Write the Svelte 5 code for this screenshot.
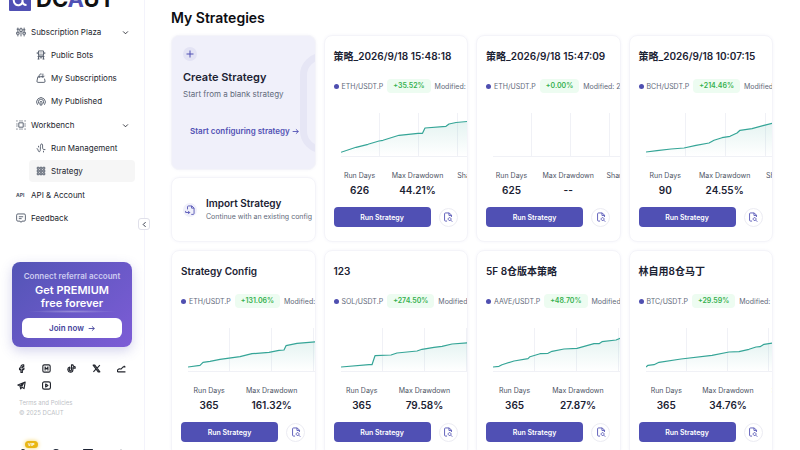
<script>
  const strategies = [
    { name: '策略_2026/9/18 15:48:18', pair: 'ETH/USDT.P', profit: '+35.52%', modified: '2026-09-18', days: '626', drawdown: '44.21%', sharpe: '0.84', step: 39,
      line: '0,39.3 15,34.3 27,31.3 38,28 42,27.3 58,22.3 77,20.3 81.5,20.3 84,15 105,13.3 108,11 115,9.5 128,8.3 150,7' },
    { name: '策略_2026/9/18 15:47:09', pair: 'ETH/USDT.P', profit: '+0.00%', modified: '2026-09-18', days: '625', drawdown: '--', sharpe: '--', step: 39, line: '' },
    { name: '策略_2026/9/18 10:07:15', pair: 'BCH/USDT.P', profit: '+214.46%', modified: '2026-09-18', days: '90', drawdown: '24.55%', sharpe: '3.1', step: 40,
      line: '0,39 11,37.7 25,36 38,35 50,32.3 63,30 68,27.3 76,24.7 84,23.3 91,20 94,17.3 106,15.7 118,12.3 128,10 150,8' },
    { name: 'Strategy Config', pair: 'ETH/USDT.P', profit: '+131.06%', modified: '2026-09-11 16h', days: '365', drawdown: '161.32%', sharpe: '1.9', step: 42,
      line: '0,39 12,37.3 15,34.3 22,33.3 32,31.3 52,28.7 64,25.7 81,24.3 91,22.3 96,22 98,17.7 109,15.3 128,13.7 150,12' },
    { name: '123', pair: 'SOL/USDT.P', profit: '+274.50%', modified: '2026-09-10 8h', days: '365', drawdown: '79.58%', sharpe: '2.4', step: 42,
      line: '0,39 28,36.7 31,36.7 34,27.7 50,27 56,25 76,23 81,21.3 93,19.3 101,18.3 111,16 128,14.7 150,13' },
    { name: '5F 8仓版本策略', pair: 'AAVE/USDT.P', profit: '+48.70%', modified: '2026-09-09 9h', days: '365', drawdown: '27.87%', sharpe: '1.7', step: 42,
      line: '0,39 6,38.3 9,36.7 21,33 35,30.7 37,28.7 47,25.7 55,25.3 59,23.3 71,21 84,20.3 101,15.7 106,15.7 109,13.7 123,12 128,10 150,8' },
    { name: '林自用8仓马丁', pair: 'BTC/USDT.P', profit: '+29.59%', modified: '2026-09-08 7h', days: '365', drawdown: '34.76%', sharpe: '1.2', step: 41,
      line: '0,39 2,37.3 8,36.7 13,34.3 35,31 66,27.3 83,24 93,23.7 103,21.3 110,19 114,18.7 118,16.3 128,14.7 150,13' },
  ];

  const plaza = [
    { label: 'Public Bots', icon: 'bot' },
    { label: 'My Subscriptions', icon: 'bag' },
    { label: 'My Published', icon: 'radio' },
  ];

  const workbench = [
    { label: 'Run Management', icon: 'wave' },
    { label: 'Strategy', icon: 'grid', active: true },
  ];

  const socials = ['facebook', 'medium', 'tiktok', 'x', 'chart', 'telegram', 'youtube'];

  // 16x16 stroke icons
  const icons = {
    sliders: 'M3 1v7M3 12v3M8 1v2M8 7v8M13 1v7M13 12v3M1 8.500h4v3H1zM6 3h4v4H6zM11 8.500h4v3h-4zM1 3.500h4M11 4.500h4',
    bot: 'M4 1.500h8v6.500H4zM2 3.500v3M14 3.500v3M6.500 4v1.500M9.500 4v1.500M5 8l-2 2.500h10L11 8M4 10.500v4M12 10.500v4M6 12.500h4M2.500 14.500h3M10.500 14.500h3',
    bag: 'M11 6H3L1.500 13a1.800 1.800 0 0 0 1.800 2h9.400a1.800 1.800 0 0 0 1.800-2L13.500 9M5 8V4.500a3 3 0 0 1 4-2.800M11 1v6M13.500 4.500L11 7 8.500 4.500',
    radio: 'M2.500 14A7 7 0 1 1 13.500 14M5 12.500A4.300 4.300 0 1 1 11 12.500M8 8.500a1.500 1.500 0 0 1 1.500 1.500v4.500h-3V10A1.500 1.500 0 0 1 8 8.500z',
    bench: 'M4.500 4.500h7v7h-7zM5 1.500h1M10 1.500h1M5 14.500h1M10 14.500h1M1.500 5v1M1.500 10v1M14.500 5v1M14.500 10v1M.5 1.500h2M13.500 1.500h2M.5 14.500h2M13.500 14.500h2M8 .5v2M8 13.500v2M.5 8h2M13.500 8h2',
    wave: 'M1 9h1c1.500 0 1 5 3 5s2-3 2-6 0-6.500 2-6.500 1.500 3 1.500 5 .5 4 2 4H15M4 7V4.500M12 12.500V15',
    grid: 'M2 2h3v3H2zM6.500 2h3v3h-3zM11 2h3v3h-3zM2 6.500h3v3H2zM6.500 6.500h3v3h-3zM11 6.500h3v3h-3zM2 11h3v3H2zM6.500 11h3v3h-3zM11 11h3v3h-3z',
    feedback: 'M3 1.500h10a2 2 0 0 1 2 2v7.500a2 2 0 0 1-2 2H9.500L8 15l-1.500-2H3a2 2 0 0 1-2-2V3.500a2 2 0 0 1 2-2zM4.500 6h7M4.500 9h4.500',
    down: 'M2.500 5.500l5.500 5.500 5.500-5.500',
    left: 'M10.500 2.500L5 8l5.500 5.500',
    plus: 'M8 1v14M1 8h14',
    arrow: 'M1.500 8h13M9 3l5.500 5L9 13',
    importFile: 'M4 7V3a1.500 1.500 0 0 1 1.500-1.500H11L14.500 5v8.500A1.500 1.500 0 0 1 13 15h-3M10.500 1.500V5h4M1 12h6.500M5 9.500L7.500 12 5 14.500M1 9.500V12',
    report: 'M6.500 14.500H4A1.500 1.500 0 0 1 2.500 13V3A1.500 1.500 0 0 1 4 1.500h6L13.500 5v3M9.500 1.500v4h4M10.500 9a2.300 2.300 0 1 0 .1 0M12.300 13l2.500 2.500',
    facebook: 'M12 1.500h-1.500A3.500 3.500 0 0 0 7 5v2H4.500v3H7v5h2.500v-5H12l.5-3h-3V5.500a1 1 0 0 1 1-1H12z',
    medium: 'M4 1.500h8A2.500 2.500 0 0 1 14.500 4v8a2.500 2.500 0 0 1-2.500 2.500H4A2.500 2.500 0 0 1 1.500 12V4A2.500 2.500 0 0 1 4 1.500zM5.500 11.500v-7M10.500 4.500v7M5.500 6l2.500 2.500L10.500 6',
    tiktok: 'M8 1.500h2.500c0 2 1.500 3.500 4 3.500v2.500c-1.500 0-3-.5-4-1.300V10a4.500 4.500 0 1 1-5.500-4.400v2.700A2 2 0 1 0 8 10z',
    x: 'M2 2h3l9 12h-3zM14 2L9 7.200M7 9.200L2.500 14',
    chart: 'M1 14h14M1 14v-3.500l3-2 3 .5 4-4h4M13 3v3',
    telegram: 'M14.500 2L1.500 7l4 2 1 5 2.500-3 3.500 2.500zM5.500 9l6-4.500L8 10',
    youtube: 'M4 1.500h8A3 3 0 0 1 15 4.500v7a3 3 0 0 1-3 3H4a3 3 0 0 1-3-3v-7a3 3 0 0 1 3-3zM6.500 5.500v5l4-2.500z',
    user: 'M8 1a3 3 0 1 0 .1 0M2 15a6 6 0 0 1 12 0',
    bell: 'M8 1a6 6 0 1 0 .1 0M8 5v4',
    card: 'M1 1h14v12H1zM1 2h14M1 3h14',
    globe: 'M8 1v3M3 14a5 5 0 0 1 10 0',
  };

  const footer = ['user', 'bell', 'card', 'globe'];
</script>

{#snippet icon(name)}
  <svg class="icon" viewBox="0 0 16 16" aria-hidden="true"><path d={icons[name]} /></svg>
{/snippet}

{#snippet subMenu(items)}
  <div class="sub-menu">
    {#each items as item}
      <a href="#{item.icon}" class="nav-item" class:active={item.active}>
        {@render icon(item.icon)}
        <span>{item.label}</span>
      </a>
    {/each}
  </div>
{/snippet}

<div class="app">
  <aside class="sidebar">
    <div class="logo">
      <svg class="logo-mark" viewBox="0 0 22 22" aria-hidden="true">
        <rect width="22" height="22" rx="1" />
        <path d="M13.500 4v8c0 2.500 1 4 4 4M13.500 10a4.500 4.800 0 1 0 0 3" />
      </svg>
      <span class="logo-text">DC<span class="logo-accent">A</span>UT</span>
    </div>

    <nav class="menu">
      <button class="nav-item">
        {@render icon('sliders')}
        <span>Subscription Plaza</span>
        <span class="chevron">{@render icon('down')}</span>
      </button>
      {@render subMenu(plaza)}
      <button class="nav-item">
        {@render icon('bench')}
        <span>Workbench</span>
        <span class="chevron">{@render icon('down')}</span>
      </button>
      {@render subMenu(workbench)}
      <a href="#api" class="nav-item">
        <span class="api-icon">API</span>
        <span>API &amp; Account</span>
      </a>
      <a href="#feedback" class="nav-item">
        {@render icon('feedback')}
        <span>Feedback</span>
      </a>
    </nav>

    <div class="promo">
      <p class="promo-sub">Connect referral account</p>
      <p class="promo-title">Get PREMIUM<br />free forever</p>
      <div class="promo-glow"></div>
      <button class="join">Join now {@render icon('arrow')}</button>
    </div>

    <div class="socials">
      {#each socials as s}
        <a href="#{s}" aria-label={s}>{@render icon(s)}</a>
      {/each}
    </div>

    <div class="legal">
      <a href="#terms">Terms and Policies</a>
      <span>© 2025 DCAUT</span>
    </div>

    <div class="footer">
      {#each footer as f, i}
        <button class="footer-item" aria-label={f}>
          {@render icon(f)}
          {#if i === 0}<span class="vip">VIP</span>{/if}
        </button>
      {/each}
    </div>

    <button class="collapse" aria-label="Collapse menu">{@render icon('left')}</button>
  </aside>

  <main class="content">
    <h1>My Strategies</h1>
    <div class="cards">
      <div class="start">
        <section class="create">
          <div class="ring"></div>
          <span class="round">{@render icon('plus')}</span>
          <h2>Create Strategy</h2>
          <p>Start from a blank strategy</p>
          <a href="#create">Start configuring strategy {@render icon('arrow')}</a>
        </section>
        <section class="import">
          <span class="round">{@render icon('importFile')}</span>
          <div>
            <h2>Import Strategy</h2>
            <p>Continue with an existing config</p>
          </div>
        </section>
      </div>

      {#each strategies as s, i}
        <article class="card">
          <h2>{s.name}</h2>
          <div class="details">
            <div class="tags">
              <span class="pair">{s.pair}</span>
              <span class="profit">{s.profit}</span>
              <span class="modified">Modified: {s.modified}</span>
            </div>
            <svg class="chart" viewBox="0 0 150 44" aria-hidden="true">
              <defs>
                <linearGradient id="fill-{i}" x1="0" y1="0" x2="0" y2="1">
                  <stop offset="0" stop-color="#3aa89a" stop-opacity="0.14" />
                  <stop offset="1" stop-color="#3aa89a" stop-opacity="0" />
                </linearGradient>
              </defs>
              {#each [1, 2, 3] as n}
                <path class="grid-line" d="M{n * s.step - 0.5} 0V43" />
              {/each}
              <path class="axis" d="M0 43.5H150" />
              {#if s.line}
                <polygon points="0,43 {s.line} 150,43" fill="url(#fill-{i})" />
                <polyline class="line" points={s.line} />
              {/if}
            </svg>
            <dl class="stats">
              <div><dt>Run Days</dt><dd>{s.days}</dd></div>
              <div><dt>Max Drawdown</dt><dd>{s.drawdown}</dd></div>
              <div><dt>Sharpe Ratio</dt><dd>{s.sharpe}</dd></div>
            </dl>
          </div>
          <div class="actions">
            <button class="run">Run Strategy</button>
            <button class="report" aria-label="View report">{@render icon('report')}</button>
          </div>
        </article>
      {/each}
    </div>
  </main>
</div>

<style>
  :global(body) {
    background: #fff;
    color: #1b2233;
    font-family: Inter, "Noto Sans CJK SC", sans-serif;
    font-size: 8px;
  }

  .app,
  .app * {
    box-sizing: border-box;
  }

  .app {
    display: flex;
    height: 100vh;
    overflow: hidden;
  }

  h1,
  h2,
  p,
  dl,
  dd {
    margin: 0;
  }

  button {
    font: inherit;
    color: inherit;
    border: 0;
    padding: 0;
    background: none;
    cursor: pointer;
  }

  a {
    color: inherit;
    text-decoration: none;
  }

  .icon {
    width: 10px;
    height: 10px;
    flex: none;
    fill: none;
    stroke: currentColor;
    stroke-width: 1.4;
    stroke-linejoin: round;
  }

  /* sidebar */
  .sidebar {
    position: relative;
    flex: none;
    width: 145px;
    border-right: 1px solid #f3f3fb;
    display: flex;
    flex-direction: column;
  }

  .logo {
    flex: none;
    height: 11px;
    padding-left: 9px;
    display: flex;
    align-items: flex-end;
    gap: 5px;
    overflow: hidden;
  }

  .logo-mark {
    width: 22px;
    height: 22px;
    flex: none;
  }

  .logo-mark rect {
    fill: #5050b4;
  }

  .logo-mark path {
    fill: none;
    stroke: #fff;
    stroke-width: 2;
  }

  .logo-text {
    font-size: 22px;
    font-weight: 700;
    line-height: 24px;
    color: #111;
  }

  .logo-accent {
    color: #5050b4;
  }

  .menu {
    margin-top: 10px;
    padding: 0 9px 0 10px;
    display: flex;
    flex-direction: column;
    gap: 1px;
  }

  .nav-item {
    height: 22px;
    padding: 0 6px;
    display: flex;
    align-items: center;
    gap: 5px;
    border-radius: 4px;
    color: #22252d;
    white-space: nowrap;
  }

  .nav-item .icon {
    color: #4a5363;
  }

  .nav-item .chevron {
    display: flex;
    margin-left: auto;
  }

  .nav-item .chevron .icon {
    width: 7px;
    height: 7px;
    stroke-width: 2;
    color: #22252d;
  }

  .sub-menu {
    margin-left: 19px;
    padding-bottom: 1px;
    display: flex;
    flex-direction: column;
    gap: 1px;
  }

  .sub-menu .nav-item {
    padding-left: 7px;
  }

  .active {
    background: #f6f6f6;
  }

  .api-icon {
    width: 10px;
    font-size: 5px;
    font-weight: 700;
    color: #4a5363;
  }

  .promo {
    margin: 33px 12px 0;
    padding: 8px 10px 9px;
    border-radius: 8px;
    background: linear-gradient(135deg, #5355b6, #7d5cd6);
    box-shadow: 0 4px 12px rgba(83, 85, 182, 0.25);
    color: #fff;
    text-align: center;
  }

  .promo-sub {
    line-height: 12px;
    font-weight: 600;
    color: #cdccf0;
    white-space: nowrap;
  }

  .promo-title {
    margin-top: 2px;
    font-size: 11px;
    font-weight: 600;
    line-height: 13px;
  }

  .promo-glow {
    height: 3px;
    margin: 0 6px;
    background: radial-gradient(closest-side, rgba(255, 255, 255, 0.3), transparent);
  }

  .join {
    width: 100%;
    height: 20px;
    margin-top: 5px;
    display: flex;
    align-items: center;
    justify-content: center;
    gap: 4px;
    border-radius: 6px;
    background: #fff;
    color: #43439b;
    font-weight: 600;
  }

  .join .icon {
    width: 7px;
    height: 7px;
    stroke-width: 2;
  }

  .socials {
    margin: 16px 10px 0 9px;
    display: grid;
    grid-template-columns: repeat(5, 1fr);
    row-gap: 7px;
  }

  .socials a {
    height: 10px;
    display: flex;
    justify-content: center;
    align-items: center;
  }

  .socials .icon {
    width: 9px;
    height: 9px;
    stroke-width: 2;
    color: #22252d;
  }

  .legal {
    margin-top: 8px;
    padding-left: 19px;
    display: flex;
    flex-direction: column;
    font-size: 6px;
    line-height: 10px;
    color: #bdbfc6;
  }

  .footer {
    flex: none;
    margin-top: 31px;
    padding: 0 7px;
    display: grid;
    grid-template-columns: repeat(4, 1fr);
  }

  .footer-item {
    position: relative;
    display: flex;
    justify-content: center;
  }

  .footer-item .icon {
    stroke-width: 2;
  }

  .vip {
    position: absolute;
    left: 18px;
    top: -8px;
    padding: 0 3px;
    border-radius: 4px;
    background: #e9b613;
    box-shadow: 0 0 4px #f5cf52;
    color: #fff;
    font-size: 4px;
    font-weight: 700;
    line-height: 7px;
  }

  .collapse {
    position: absolute;
    right: -6px;
    top: 218px;
    width: 12px;
    height: 12px;
    display: flex;
    align-items: center;
    justify-content: center;
    border: 1px solid #e0e0ea;
    border-radius: 3px;
    background: #fff;
  }

  .collapse .icon {
    width: 7px;
    height: 7px;
    stroke-width: 2;
  }

  /* content */
  .content {
    flex: 1;
    min-width: 0;
    padding: 8px 27px 0 26px;
  }

  h1 {
    font-size: 14px;
    font-weight: 600;
    line-height: 20px;
    color: #0c0d12;
  }

  h2 {
    font-size: 10px;
    font-weight: 600;
    line-height: 14px;
    white-space: nowrap;
  }

  .cards {
    margin-top: 7px;
    display: grid;
    grid-template-columns: repeat(4, minmax(0, 1fr));
    gap: 8px;
  }

  .start {
    display: flex;
    flex-direction: column;
    gap: 7px;
  }

  .create,
  .import,
  .card {
    border: 1px solid #f4f4f9;
    border-radius: 8px;
    overflow: hidden;
    white-space: nowrap;
    box-shadow: 0 0 3px rgba(80, 80, 180, 0.06);
  }

  .create {
    position: relative;
    flex: 1;
    padding: 11px;
    background: #f0f0fa;
  }

  .round {
    flex: none;
    width: 14px;
    height: 14px;
    display: flex;
    align-items: center;
    justify-content: center;
    border-radius: 50%;
    background: #e3e3f4;
    color: #5050b4;
  }

  .create .round .icon {
    width: 8px;
    height: 8px;
    stroke-width: 2;
  }

  .create h2 {
    margin-top: 9px;
    font-size: 11px;
  }

  .create p,
  .import p {
    line-height: 12px;
    color: #626a7a;
  }

  .create p {
    margin-top: 4px;
  }

  .create a {
    margin: 25px 0 0 7px;
    display: flex;
    align-items: center;
    gap: 2px;
    line-height: 12px;
    font-weight: 600;
    color: #5050b4;
  }

  .create a .icon {
    width: 7px;
    height: 7px;
    stroke-width: 2;
  }

  .ring {
    position: absolute;
    left: 128px;
    top: 17px;
    width: 60px;
    height: 100px;
    border: 7px solid #e6e6f5;
    border-radius: 22px;
  }

  .import {
    height: 65px;
    padding: 0 11px;
    display: flex;
    align-items: center;
    gap: 9px;
  }

  .import .round {
    background: #f0f0fa;
  }

  .import p {
    margin-top: 1px;
    font-size: 7px;
  }

  .card {
    padding: 9px 9px 14px;
  }

  .card h2 {
    line-height: 22px;
  }

  .details {
    width: max-content;
    min-width: 100%;
    margin-top: 12px;
  }

  .tags {
    height: 14px;
    display: flex;
    align-items: center;
    gap: 4px;
    font-size: 7px;
    color: #626a7a;
  }

  .pair {
    display: flex;
    align-items: center;
    gap: 3px;
  }

  .pair::before {
    content: "";
    width: 5px;
    height: 5px;
    border-radius: 50%;
    background: #4f4fb0;
  }

  .profit {
    padding: 0 6px;
    border-radius: 4px;
    background: #edfcf1;
    color: #35b04e;
    font-weight: 600;
    line-height: 14px;
  }

  .chart {
    display: block;
    width: 150px;
    height: 44px;
    margin: 20px 0 0 7px;
  }

  .grid-line,
  .axis {
    stroke: #f0f1f6;
    stroke-width: 1;
  }

  .line {
    fill: none;
    stroke: #35a597;
    stroke-width: 1.2;
    stroke-linejoin: round;
  }

  .stats {
    margin-top: 14px;
    display: grid;
    grid-template-columns: 9fr 11fr 10fr;
    text-align: center;
  }

  dt {
    font-size: 7px;
    line-height: 10px;
    color: #4c5364;
  }

  dd {
    margin-top: 3px;
    font-size: 10px;
    font-weight: 600;
    line-height: 12px;
  }

  .actions {
    margin-top: 11px;
    display: flex;
    align-items: center;
    gap: 8px;
  }

  .run {
    width: 97px;
    height: 20px;
    border-radius: 4px;
    background: #5050b4;
    color: #fff;
    font-size: 7px;
    font-weight: 600;
  }

  .report {
    width: 19px;
    height: 19px;
    display: flex;
    align-items: center;
    justify-content: center;
    border: 1px solid #ececf3;
    border-radius: 50%;
    color: #5050b4;
  }
</style>
